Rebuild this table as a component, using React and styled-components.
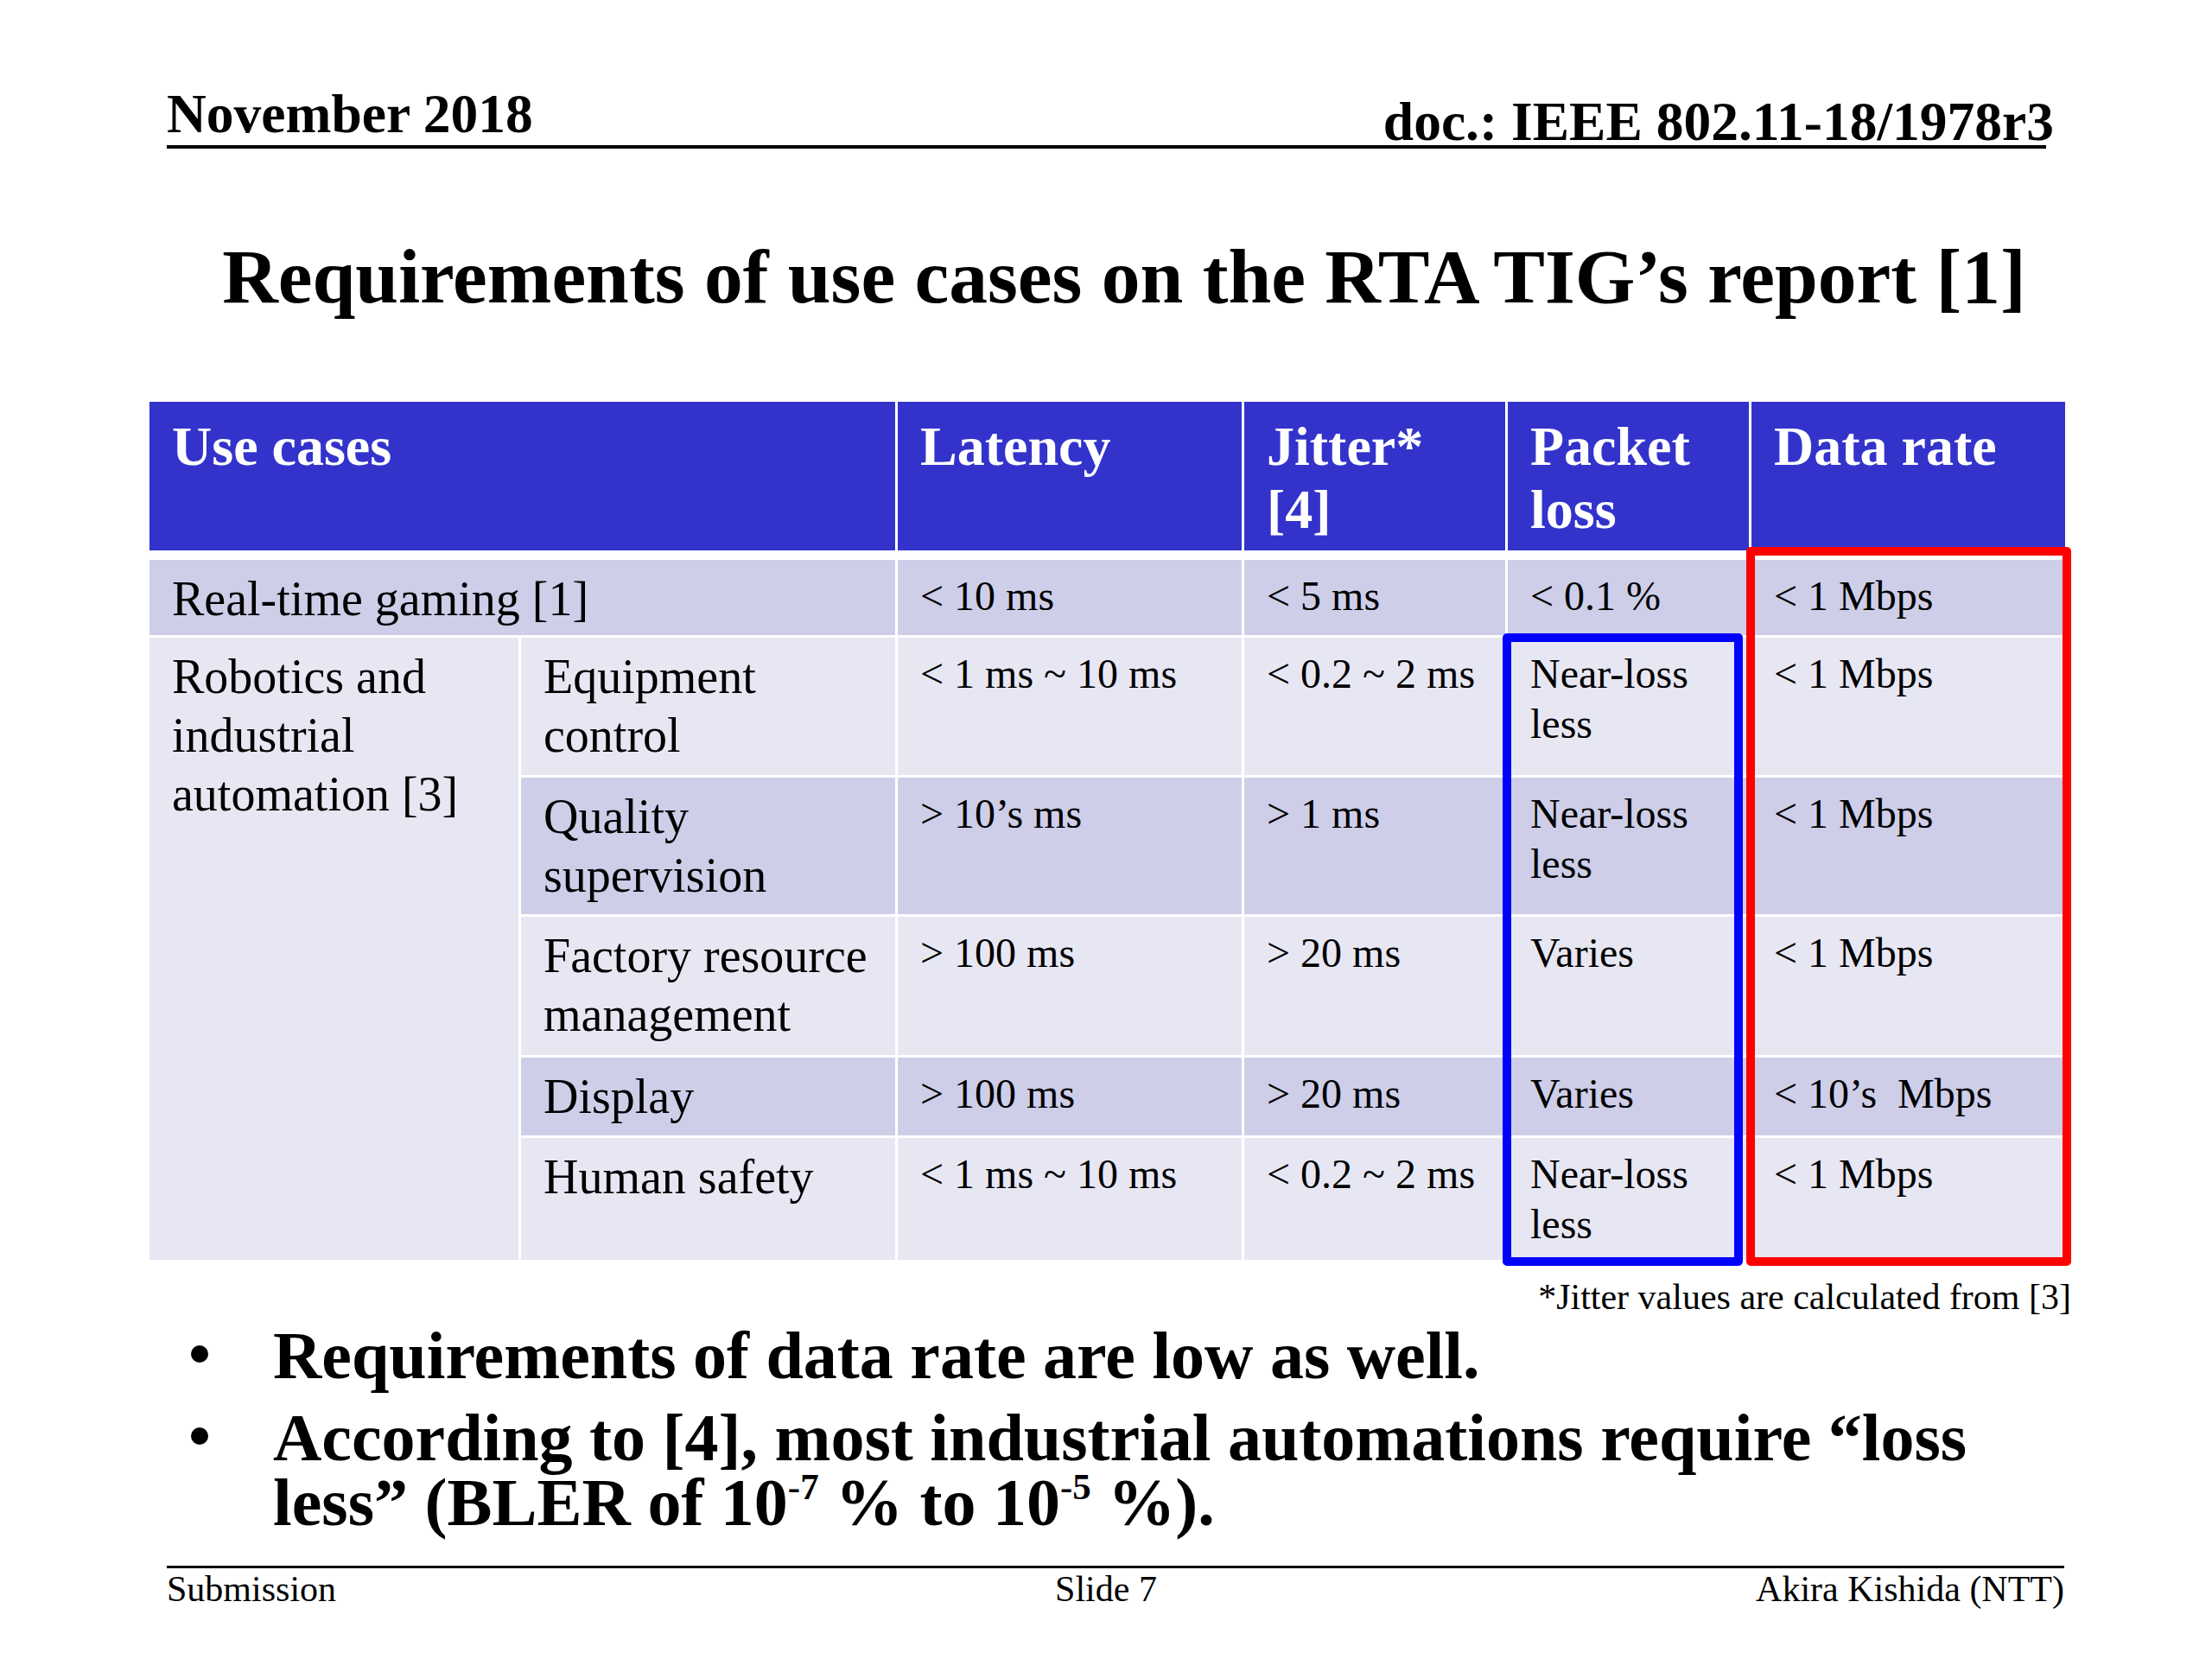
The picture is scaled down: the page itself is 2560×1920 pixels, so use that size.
import React from 'react';
import styled, { createGlobalStyle } from 'styled-components';

const GlobalStyle = createGlobalStyle`
  html, body {
    margin: 0;
    padding: 0;
    background: #ffffff;
  }
  body {
    font-family: 'Liberation Serif', 'Times New Roman', serif;
    color: #000000;
  }
`;

const tones = {
  head: '#3333cc',
  dark: '#cecee9',
  light: '#e7e7f3',
};

const useCaseRows = [
  { name: 'Equipment control', latency: '< 1 ms ~ 10 ms', jitter: '< 0.2 ~ 2 ms', loss: 'Near-loss less', rate: '< 1 Mbps', tone: 'light' },
  { name: 'Quality supervision', latency: '> 10’s ms', jitter: '> 1 ms', loss: 'Near-loss less', rate: '< 1 Mbps', tone: 'dark' },
  { name: 'Factory resource management', latency: '> 100 ms', jitter: '> 20 ms', loss: 'Varies', rate: '< 1 Mbps', tone: 'light' },
  { name: 'Display', latency: '> 100 ms', jitter: '> 20 ms', loss: 'Varies', rate: '< 10’s \u00a0Mbps', tone: 'dark' },
  { name: 'Human safety', latency: '< 1 ms ~ 10 ms', jitter: '< 0.2 ~ 2 ms', loss: 'Near-loss less', rate: '< 1 Mbps', tone: 'light' },
];

export default function App() {
  return (
    <>
      <GlobalStyle />
      <Slide>
        <TopBar>
          <span>November 2018</span>
          <DocId>doc.: IEEE 802.11-18/1978r3</DocId>
        </TopBar>

        <Title>Requirements of use cases on the RTA TIG’s report [1]</Title>

        <TableWrap>
          <Grid>
            <HeadCell $span={2}>Use cases</HeadCell>
            <HeadCell>Latency</HeadCell>
            <HeadCell>Jitter* [4]</HeadCell>
            <HeadCell>Packet loss</HeadCell>
            <HeadCell>Data rate</HeadCell>

            <NameCell $span={2} $tone="dark">Real-time gaming [1]</NameCell>
            <ValueCell $tone="dark">&lt; 10 ms</ValueCell>
            <ValueCell $tone="dark">&lt; 5 ms</ValueCell>
            <ValueCell $tone="dark">&lt; 0.1 %</ValueCell>
            <ValueCell $tone="dark">&lt; 1 Mbps</ValueCell>

            <NameCell $rows={5} $tone="light">Robotics and industrial automation [3]</NameCell>
            {useCaseRows.map((row) => (
              <React.Fragment key={row.name}>
                <NameCell $tone={row.tone}>{row.name}</NameCell>
                <ValueCell $tone={row.tone}>{row.latency}</ValueCell>
                <ValueCell $tone={row.tone}>{row.jitter}</ValueCell>
                <ValueCell $tone={row.tone}>{row.loss}</ValueCell>
                <ValueCell $tone={row.tone}>{row.rate}</ValueCell>
              </React.Fragment>
            ))}
          </Grid>

          {/* highlight frames drawn over the table */}
          <Highlight $color="#0000ff" $left={1566} $top={268} $width={278} $height={732} />
          <Highlight $color="#ff0000" $left={1848} $top={168} $width={376} $height={832} />
        </TableWrap>

        <Footnote>*Jitter values are calculated from [3]</Footnote>

        <Bullets>
          <BulletItem>
            <Dot />
            <span>Requirements of data rate are low as well.</span>
          </BulletItem>
          <BulletItem>
            <Dot />
            <span>
              According to [4], most industrial automations require “loss less” (BLER of 10<Sup>-7</Sup> % to 10<Sup>-5</Sup> %).
            </span>
          </BulletItem>
        </Bullets>

        <Footer>
          <span>Submission</span>
          <SlideNo>Slide 7</SlideNo>
          <Author>Akira Kishida (NTT)</Author>
        </Footer>
      </Slide>
    </>
  );
}

const Slide = styled.div`
  width: 2560px;
  height: 1920px;
  background: #ffffff;
  display: flex;
  flex-direction: column;
  overflow: hidden;
`;

const TopBar = styled.header`
  display: flex;
  justify-content: space-between;
  align-items: flex-start;
  height: 68px;
  margin: 100px 192px 0 193px;
  border-bottom: 4px solid #000000;
  font-size: 63.5px;
  font-weight: 700;
  line-height: 63px;
  white-space: nowrap;
`;

const DocId = styled.span`
  margin-top: 9px;
  margin-right: -9px;
`;

const Title = styled.h1`
  margin: 104px 0 0;
  padding-left: 42px;
  font-size: 89.5px;
  font-weight: 700;
  line-height: 88px;
  text-align: center;
  white-space: nowrap;
`;

const TableWrap = styled.div`
  position: relative;
  width: 2217px;
  margin: 101px 0 0 173px;
`;

const Grid = styled.div`
  display: grid;
  grid-template-columns: 427px 433px 398px 302px 279px 363px;
  grid-template-rows: 180px 87px 159px 158px 160px 90px 141px;
  gap: 3px;
  background: #ffffff;
`;

const CellBase = styled.div`
  grid-column: span ${({ $span = 1 }) => $span};
  grid-row: span ${({ $rows = 1 }) => $rows};
  background: ${({ $tone = 'light' }) => tones[$tone]};
  padding-left: 26px;
  padding-right: 20px;
`;

const HeadCell = styled(CellBase)`
  background: ${tones.head};
  margin-bottom: 8px;
  padding-top: 15px;
  color: #ffffff;
  font-size: 64px;
  font-weight: 700;
  line-height: 73px;
`;

const NameCell = styled(CellBase)`
  padding-top: 11px;
  font-size: 56px;
  line-height: 68px;
`;

const ValueCell = styled(CellBase)`
  padding-top: 13px;
  font-size: 48px;
  line-height: 58px;
`;

const Highlight = styled.div`
  position: absolute;
  left: ${({ $left }) => $left}px;
  top: ${({ $top }) => $top}px;
  width: ${({ $width }) => $width}px;
  height: ${({ $height }) => $height}px;
  box-sizing: border-box;
  border: 10px solid ${({ $color }) => $color};
  border-radius: 5px;
  pointer-events: none;
`;

const Footnote = styled.p`
  margin: 22px 0 0;
  padding-right: 163px;
  font-size: 42px;
  line-height: 42px;
  text-align: right;
`;

const Bullets = styled.ul`
  list-style: none;
  margin: 9px 0 0;
  padding: 0 170px 0 221px;
  display: flex;
  flex-direction: column;
  gap: 20px;
`;

const BulletItem = styled.li`
  display: flex;
  align-items: flex-start;
  font-size: 78px;
  font-weight: 700;
  line-height: 75px;
`;

const Dot = styled.span`
  flex: none;
  width: 20px;
  height: 20px;
  margin: 26px 75px 0 0;
  border-radius: 50%;
  background: #000000;
`;

const Sup = styled.span`
  font-size: 0.55em;
  line-height: 0;
  vertical-align: 0.7em;
`;

const Footer = styled.footer`
  display: grid;
  grid-template-columns: 1fr auto 1fr;
  margin: auto 171px 60px 193px;
  padding-top: 3px;
  border-top: 3px solid #000000;
  font-size: 42px;
  line-height: 42px;
`;

const SlideNo = styled.span`
  margin-right: 22px;
`;

const Author = styled.span`
  justify-self: end;
`;
